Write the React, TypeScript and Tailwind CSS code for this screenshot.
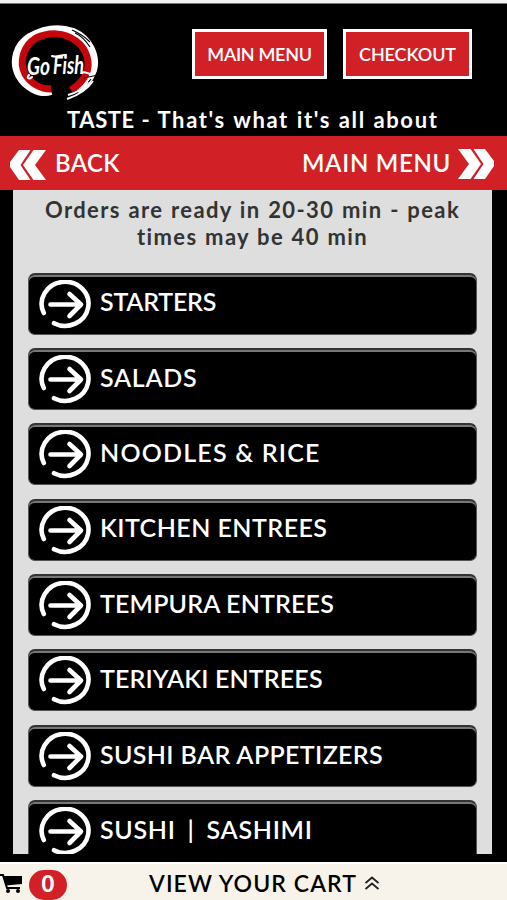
import React from 'react';

interface MenuItem {
    label: string;
    tracking: string;
}

const menuItems: MenuItem[] = [
    { label: 'STARTERS', tracking: 'tracking-[-0.25px]' },
    { label: 'SALADS', tracking: 'tracking-[0.7px]' },
    { label: 'NOODLES & RICE', tracking: 'tracking-[1.2px]' },
    { label: 'KITCHEN ENTREES', tracking: 'tracking-[0.45px]' },
    { label: 'TEMPURA ENTREES', tracking: 'tracking-[0.15px]' },
    { label: 'TERIYAKI ENTREES', tracking: 'tracking-[0.12px]' },
    { label: 'SUSHI BAR APPETIZERS', tracking: 'tracking-[0.35px]' },
    { label: 'SUSHI | SASHIMI', tracking: 'tracking-[0.7px] [word-spacing:5px]' },
];

const Logo: React.FC = () => (
    <svg viewBox="0 0 90 78" className="h-[78px] w-[90px]" fill="none">
        {/* Brush ring */}
        <path d="M41 67C29 71 15 62 9 51C2 37 7 21 20 13C34 5 49 3 63 8C79 15 87 32 83 46C80 55 75 61 67 66" stroke="#fff" strokeWidth="8" />
        <path d="M41 65C31 65 21 60 15 50C9 38 13 22 26 14C39 8 54 8 66 17C77 25 81 39 76 50C73 57 69 61 61 66" stroke="#c5070d" strokeWidth="7" />
        <path d="M62 6C69 9 75 13 80 18M65 9C72 12 76 17 80 23M74 54L88 51M59 70C70 67 77 61 81 55" stroke="#000" strokeWidth="1.2" />
        <path d="M57 75C66 72 77 66 83 57M58 71C66 69 74 64 78 58" stroke="#fff" strokeWidth="2" />
        <text x="17" y="51" fill="#fff" fontFamily="Lato, sans-serif" fontStyle="italic" fontWeight="700" fontSize="24" textLength="23" lengthAdjust="spacingAndGlyphs">Go</text>
        <text x="43" y="50" fill="#fff" fontFamily="Lato, sans-serif" fontStyle="italic" fontWeight="700" fontSize="25" textLength="31" lengthAdjust="spacingAndGlyphs">Fish</text>
        {/* Brush strokes trailing off the lettering */}
        <path d="M42 32C47 34 52 30 56 31M19 51C16 54 19 56 22 53M72 49C74 47 76 49 80 50" stroke="#fff" strokeWidth="2" strokeLinecap="round" />
    </svg>
);

const CircleArrow: React.FC = () => (
    <svg viewBox="0 0 52 50" className="mt-[1px] h-[50px] w-[52px] shrink-0" fill="none" stroke="#fff" strokeLinecap="round">
        <path d="M4.8 33A23.4 22 0 1 1 15 43.2" strokeWidth="4.6" />
        <path d="M11.5 24.5H41M30.5 14L42 24.5L30.5 36" strokeWidth="4.6" strokeLinejoin="round" />
    </svg>
);

const DoubleChevron: React.FC<{ flip?: boolean }> = ({ flip }) => (
    <svg viewBox="0 0 38 32" className={flip ? 'mt-[2px] h-8 w-[38px] -scale-x-100' : 'mt-[3px] h-8 w-[38px]'} fill="#fff">
        <path d="M10 1H21.5L11.5 16L21.5 31H10L1 18V13ZM24.5 1H37L26 16L37 31H24.5L14 16Z" />
    </svg>
);

const App: React.FC = () => {
    return (
        <div className="flex h-[900px] w-full flex-col overflow-hidden bg-black font-['Lato',sans-serif] font-semibold text-white">
            <div className="h-[4px] shrink-0 border-b border-[#777] bg-[#f2f2f2]" />

            <header className="h-[132px] shrink-0">
                <div className="flex h-[98px] items-start">
                    <div className="pt-[20px] pl-[10px]"><Logo /></div>
                    <div className="mt-[25px] ml-[92px] flex gap-4">
                        <button className="flex h-[50px] w-[135px] items-center justify-center border-[3px] border-white bg-[#d12127] text-[18px] tracking-[-0.3px]">MAIN MENU</button>
                        <button className="flex h-[50px] w-[129px] items-center justify-center border-[3px] border-white bg-[#d12127] text-[18px] tracking-[-0.1px]">CHECKOUT</button>
                    </div>
                </div>
                <p className="pl-[67px] text-[22px] leading-[35px] font-bold tracking-[1.62px] whitespace-nowrap [word-spacing:0.8px]"><span className="tracking-[0.6px]">TASTE -</span> That's what it's all about</p>
            </header>

            <nav className="flex h-[54px] shrink-0 items-center justify-between bg-[#d12127] pr-[12px] pl-[9px] text-[24px]">
                <button className="flex items-center gap-[8px]"><DoubleChevron /><span className="tracking-[0.3px]">BACK</span></button>
                <button className="flex items-center gap-[6px]"><span className="tracking-[0.7px]">MAIN MENU</span><DoubleChevron flip /></button>
            </nav>

            <main className="mr-[15px] ml-[13px] h-[664px] shrink-0 overflow-hidden bg-[#dedede] px-[15px]">
                <div className="h-[82.5px] pt-[6px] text-center text-[22px] leading-[27px] font-bold whitespace-nowrap text-[#333]">
                    <p className="tracking-[1.4px] [word-spacing:0.8px]">Orders are ready in 20-30 min - peak</p>
                    <p className="tracking-[1.38px] [word-spacing:0.8px]">times may be 40 min</p>
                </div>
                <ul className="flex flex-col gap-[13.4px]">
                    {menuItems.map((item) => (
                        <li key={item.label} className="flex h-[62px] shrink-0 items-center gap-[9px] rounded-[7px] border border-[#555] border-t-2 border-t-[#333] bg-black pl-[10px] shadow-[inset_0_2px_0_#777]">
                            <CircleArrow />
                            <span className={`-mt-[4px] text-[25px] whitespace-nowrap ${item.tracking}`}>{item.label}</span>
                        </li>
                    ))}
                </ul>
            </main>

            <footer className="mt-[8px] flex h-[38px] shrink-0 items-center border-t-2 border-white bg-[#f7f3eb] text-black">
                <svg viewBox="0 0 23 20" className="mt-[3px] h-5 w-[23px]" fill="none">
                    <path d="M0 1H3L7 14H20" stroke="#000" strokeWidth="2" />
                    <path d="M2.5 2H22V10L6 11.5Z" fill="#000" />
                    <circle cx="8" cy="17" r="2" fill="#000" />
                    <circle cx="18" cy="17" r="2" fill="#000" />
                </svg>
                <span className="mt-[5px] ml-[6px] flex h-[30px] w-[38px] items-center justify-center rounded-full bg-[#d12127] pb-[2px] text-[22px] font-black text-white">0</span>
                <button className="mt-[2px] ml-[82px] flex items-center text-[23px] whitespace-nowrap">
                    <span className="tracking-[1.1px]">VIEW YOUR CART</span>
                    <svg viewBox="0 0 14 14" className="ml-[8px] h-[14px] w-[14px]" fill="none" stroke="#222" strokeWidth="1.9">
                        <path d="M0.5 7L7 1.5L13.5 7M0.5 13L7 7.5L13.5 13" />
                    </svg>
                </button>
            </footer>
        </div>
    );
};

export default App;
